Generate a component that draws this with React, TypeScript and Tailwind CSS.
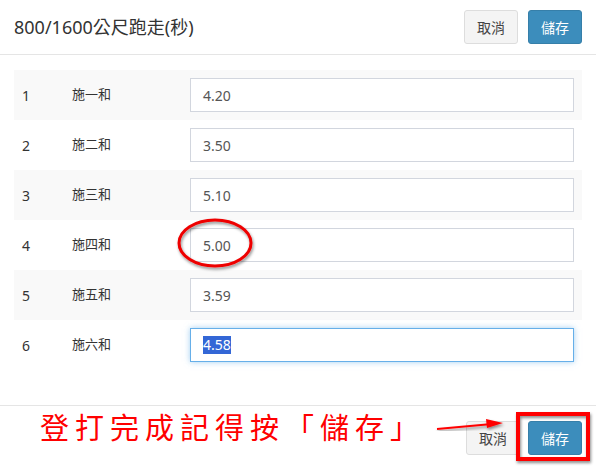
const rows = [
  { no: 1, name: '施一和', value: '4.20' },
  { no: 2, name: '施二和', value: '3.50' },
  { no: 3, name: '施三和', value: '5.10' },
  { no: 4, name: '施四和', value: '5.00' },
  { no: 5, name: '施五和', value: '3.59' },
  { no: 6, name: '施六和', value: '4.58' },
];

const font = { fontFamily: '"Noto Sans", "Noto Sans CJK TC", sans-serif' };

function FakeInput({ value, focused }: { value: string; focused?: boolean }) {
  return (
    <div
      className={
        focused
          ? 'flex h-[34px] w-[384px] items-center border border-[#66afe9] bg-white px-3 text-[14px] text-[#555] shadow-[0_0_6px_rgba(102,175,233,0.6)]'
          : 'flex h-[34px] w-[384px] items-center border border-[#d2d6de] bg-white px-3 text-[14px] text-[#555]'
      }
    >
      {focused ? <span className="bg-[#3367d6] leading-[18px] text-white">{value}</span> : value}
    </div>
  );
}

export default function App() {
  return (
    <div className="relative h-[467px] w-[596px] overflow-hidden bg-white text-[#333]" style={font}>
      {/* header */}
      <div className="flex h-[55px] items-center justify-between border-b border-[#e5e5e5] pl-[14px] pr-[14px]">
        <h4 className="text-[18px] leading-none text-[#333]">800/1600公尺跑走(秒)</h4>
        <div className="flex gap-[10px]">
          <button className="h-[34px] w-[54px] rounded-[3px] border border-[#ddd] bg-[#f4f4f4] text-[14px] text-[#444]">
            取消
          </button>
          <button className="h-[34px] w-[54px] rounded-[3px] border border-[#367fa9] bg-[#3c8dbc] text-[14px] text-white">
            儲存
          </button>
        </div>
      </div>

      {/* body */}
      <div className="px-[14px] pb-[35px] pt-[15px]">
        <div className="w-[568px]">
          {rows.map((r, i) => (
            <div
              key={r.no}
              className={i % 2 === 0 ? 'flex h-[50px] items-center bg-[#f9f9f9]' : 'flex h-[50px] items-center'}
            >
              <div className="w-[58px] pl-[8px] text-[14px] text-[#333]">{r.no}</div>
              <div className="w-[118px] text-[13px] text-[#333]">{r.name}</div>
              <FakeInput value={r.value} focused={r.no === 6} />
            </div>
          ))}
        </div>
      </div>

      {/* footer */}
      <div className="flex h-[62px] items-start justify-end gap-[8px] border-t border-[#e5e5e5] pr-[14px] pt-[15px]">
        <button className="h-[34px] w-[54px] rounded-[3px] border border-[#ddd] bg-[#f4f4f4] text-[14px] text-[#444]">
          取消
        </button>
        <button className="h-[34px] w-[54px] rounded-[3px] border border-[#367fa9] bg-[#3c8dbc] text-[14px] text-white">
          儲存
        </button>
      </div>

      {/* annotations */}
      <svg className="pointer-events-none absolute left-0 top-0" width="596" height="467">
        <defs>
          <filter id="sh" x="-20%" y="-20%" width="140%" height="140%">
            <feDropShadow dx="1" dy="2" stdDeviation="1.5" floodColor="#000" floodOpacity="0.45" />
          </filter>
        </defs>
        <ellipse cx="215" cy="243" rx="36" ry="23" fill="none" stroke="#e00" strokeWidth="3" filter="url(#sh)" />
        <rect x="518" y="414" width="70" height="45" fill="none" stroke="#f00" strokeWidth="4" filter="url(#sh)" />
        <g filter="url(#sh)">
          <line x1="437" y1="429" x2="492" y2="424" stroke="#f00" strokeWidth="2" />
          <polygon points="486,419 503,423 487,428" fill="#f00" />
        </g>
      </svg>
      <div
        className="absolute left-[40px] top-[406px] whitespace-nowrap text-[29px] leading-[40px] tracking-[6px] text-[#f00]"
        style={{ fontFamily: '"Noto Sans CJK TC", sans-serif' }}
      >
        登打完成記得按「儲存」
      </div>
    </div>
  );
}
